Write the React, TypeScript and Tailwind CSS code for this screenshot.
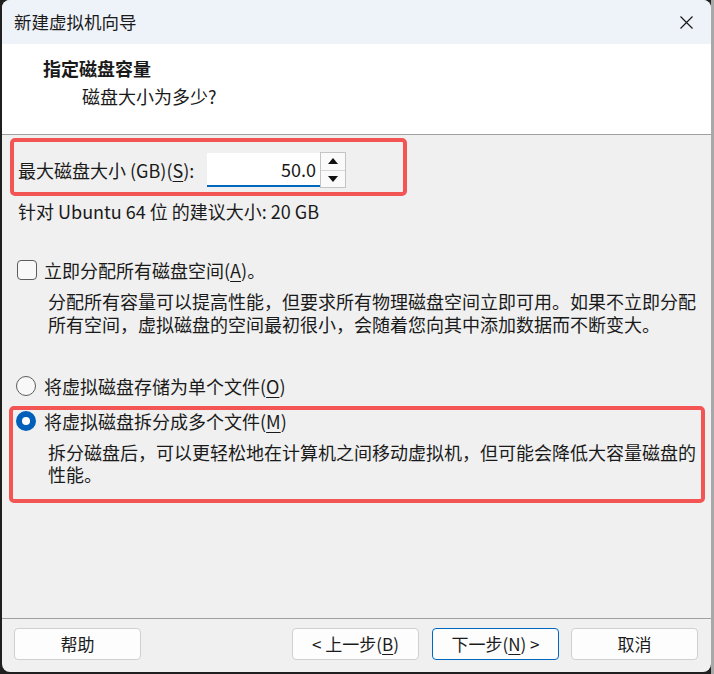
const font = { fontFamily: '"Noto Sans CJK SC", "Noto Sans", sans-serif' };

function Key({ k }: { k: string }) {
    return <span className="underline underline-offset-[3px]">{k}</span>;
}

function Btn({ children, primary }: { children: React.ReactNode; primary?: boolean }) {
    return (
        <button
            className={`w-[127px] h-[32px] rounded-[4px] bg-[#fdfdfd] text-[17px] leading-[30px] text-[#1b1b1b] border ${primary ? "border-[#0067c0]" : "border-[#d0d0d0]"}`}
        >
            {children}
        </button>
    );
}

function Tri({ up }: { up?: boolean }) {
    return (
        <svg width="10" height="6" viewBox="0 0 10 6">
            {up ? <polygon points="5,0 10,6 0,6" fill="#111" /> : <polygon points="0,0 10,0 5,6" fill="#111" />}
        </svg>
    );
}

export default function App() {
    return (
        <div className="w-[714px] h-[674px] bg-[#1f1f1f] flex" style={font}>
            <div className="w-[2px]" />
            <div className="w-[709px] h-[672px] rounded-[8px] overflow-hidden bg-[#f0f0f0] flex flex-col text-[#1a1a1a]">
                {/* title bar */}
                <div className="h-[44px] bg-[#eef2f9] flex items-center justify-between pl-[12px] pr-[18px]">
                    <span className="text-[17.5px] leading-[24px]">新建虚拟机向导</span>
                    <svg width="13" height="13" viewBox="0 0 13 13">
                        <path d="M0.5 0.5 L12.5 12.5 M12.5 0.5 L0.5 12.5" stroke="#1a1a1a" strokeWidth="1.2" />
                    </svg>
                </div>

                {/* header */}
                <div className="h-[91px] bg-white border-b border-[#a0a0a0] pt-[12px]">
                    <div className="pl-[41px] text-[18px] leading-[24px] font-bold">指定磁盘容量</div>
                    <div className="pl-[80px] mt-[4px] text-[18px] leading-[24px]">磁盘大小为多少?</div>
                </div>

                {/* content */}
                <div className="flex-1 text-[18px]">
                    <div className="mt-[3px] ml-[8px] w-[397px] h-[58px] border-4 border-[#f35454] rounded-[5px] flex items-center pt-[6px] pl-[4px]">
                        <span className="w-[189px] leading-[24px]">
                            最大磁盘大小 (GB)(<Key k="S" />):
                        </span>
                        <div className="w-[113px] h-[34px] bg-white border-b-2 border-[#0067c0] text-right pr-[4px] leading-[32px]">50.0</div>
                        <div className="w-[26px] h-[36px] border border-[#c4c4c4] bg-[#fafafa] flex flex-col">
                            <div className="flex-1 flex items-center justify-center border-b border-[#d6d6d6]">
                                <Tri up />
                            </div>
                            <div className="flex-1 flex items-center justify-center">
                                <Tri />
                            </div>
                        </div>
                    </div>

                    <div className="mt-[3px] pl-[16px] leading-[24px]">针对 Ubuntu 64 位 的建议大小: 20 GB</div>

                    <div className="mt-[35px] pl-[15px] flex items-center h-[24px]">
                        <div className="w-[20px] h-[20px] rounded-[4px] border border-[#5c5c5c] bg-[#f8f8f8]" />
                        <span className="ml-[7px] leading-[24px]">
                            立即分配所有磁盘空间(<Key k="A" />)。
                        </span>
                    </div>
                    <div className="mt-[8px] pl-[46px] leading-[23px]">
                        分配所有容量可以提高性能，但要求所有物理磁盘空间立即可用。如果不立即分配
                        <br />
                        所有空间，虚拟磁盘的空间最初很小，会随着您向其中添加数据而不断变大。
                    </div>

                    <div className="mt-[38px] pl-[14px] flex items-center h-[24px]">
                        <div className="w-[20px] h-[20px] rounded-full border border-[#5c5c5c] bg-[#f8f8f8]" />
                        <span className="ml-[8px] leading-[24px]">
                            将虚拟磁盘存储为单个文件(<Key k="O" />)
                        </span>
                    </div>

                    <div className="mt-[8px] ml-[7px] w-[696px] h-[97px] border-4 border-[#f35454] rounded-[5px]">
                        <div className="pl-[3px] flex items-center h-[22px]">
                            <div className="w-[20px] h-[20px] rounded-full bg-[#005fb8] flex items-center justify-center">
                                <div className="w-[8px] h-[8px] rounded-full bg-white" />
                            </div>
                            <span className="ml-[8px] leading-[22px]">
                                将虚拟磁盘拆分成多个文件(<Key k="M" />)
                            </span>
                        </div>
                        <div className="mt-[9px] pl-[35px] leading-[22px]">
                            拆分磁盘后，可以更轻松地在计算机之间移动虚拟机，但可能会降低大容量磁盘的
                            <br />
                            性能。
                        </div>
                    </div>
                </div>

                {/* footer */}
                <div className="h-[54px] border-t border-[#a0a0a0] flex items-start pt-[9px] pl-[12px] pr-[13px]">
                    <Btn>帮助</Btn>
                    <div className="flex-1" />
                    <div className="flex gap-[13px]">
                        <Btn>
                            &lt; 上一步(<Key k="B" />)
                        </Btn>
                        <Btn primary>
                            下一步(<Key k="N" />) &gt;
                        </Btn>
                    </div>
                    <div className="w-[12px]" />
                    <Btn>取消</Btn>
                </div>
            </div>
            <div className="w-[3px] bg-[#a8a8a8]" />
        </div>
    );
}
